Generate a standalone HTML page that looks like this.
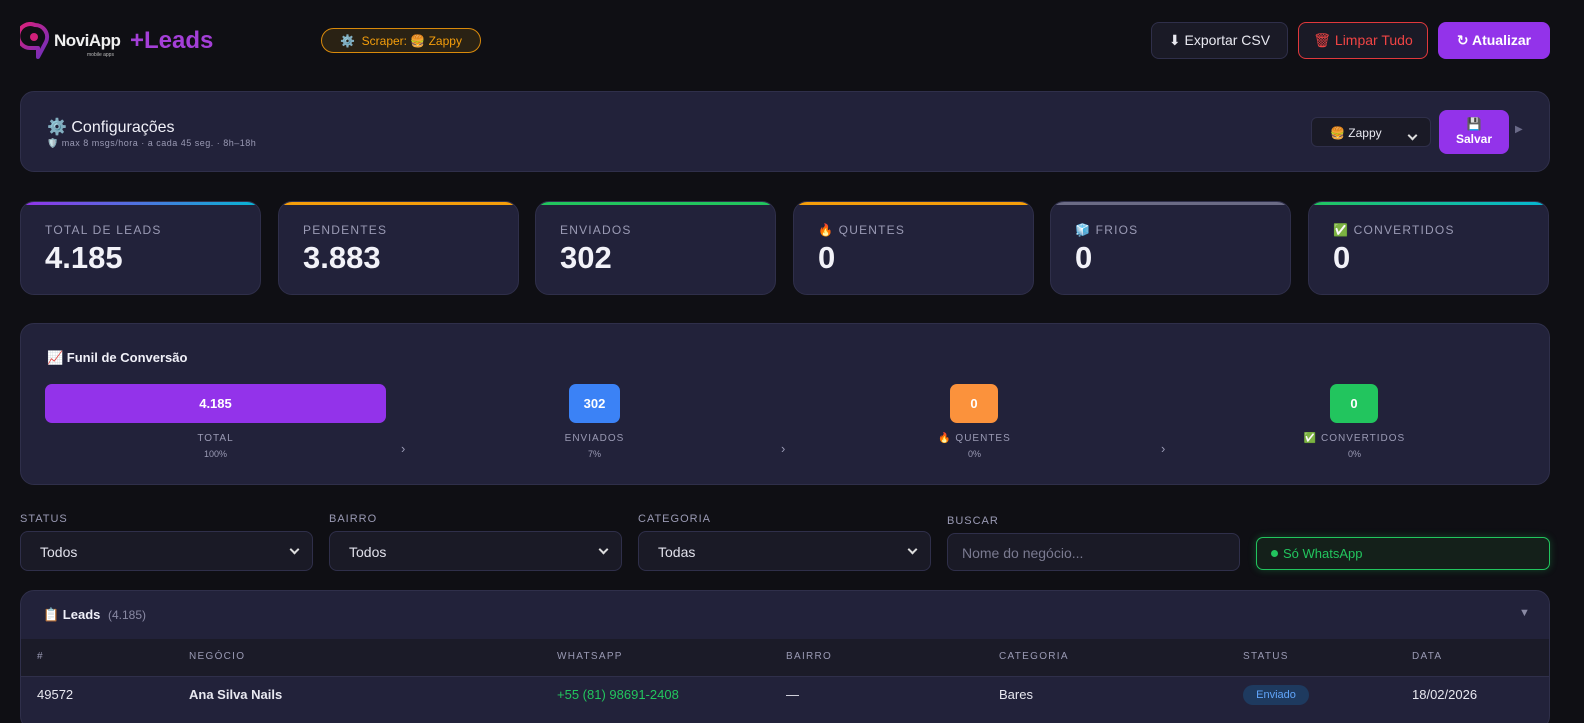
<!DOCTYPE html>
<html><head><meta charset="utf-8"><style>
*{box-sizing:border-box;margin:0;padding:0}
html,body{width:1584px;height:723px;overflow:hidden}
body{background:#0f0f14;font-family:"Liberation Sans","DejaVu Sans",sans-serif;color:#e8e8f0;position:relative}
.a{position:absolute}
.card{position:absolute;background:#22223a;border:1px solid #2f2f4a;border-radius:14px}
.btn{position:absolute;border-radius:8px;font-size:14px;display:flex;align-items:center;justify-content:center}
.stat{position:absolute;top:201px;width:241px;height:94px;background:#22223a;border:1px solid #2f2f4a;border-radius:14px;overflow:hidden}
.stat .bar{position:absolute;left:0;right:0;top:0;height:3px}
.stat .lb{position:absolute;left:24px;top:21px;font-size:12px;letter-spacing:1.2px;color:#9a9ab4}
.stat .v{position:absolute;left:24px;top:38px;font-size:31px;font-weight:bold;color:#f2f2f8}
.fl{position:absolute;top:513px;font-size:11px;letter-spacing:1px;color:#9a9ab4}
.sel{position:absolute;top:531px;width:293px;height:40px;background:#1a1a26;border:1px solid #2f2f4a;border-radius:8px;font-size:14px;color:#e0e0ea;padding:12px 19px}
.dd:after{content:"";position:absolute;right:14px;top:14px;width:5px;height:5px;border-right:2px solid #ddd;border-bottom:2px solid #ddd;transform:rotate(45deg)}
.th{position:absolute;top:651px;font-size:10px;letter-spacing:1.3px;color:#9a9ab4}
.td{position:absolute;top:687px;font-size:13px;color:#e8e8f0}
.stg{position:absolute;text-align:center;font-size:10px;letter-spacing:1px;color:#9a9ab4}
.box{position:absolute;top:384px;height:39px;border-radius:7px;color:#fff;font-weight:bold;font-size:13px;display:flex;align-items:center;justify-content:center}
.arr{position:absolute;top:441px;color:#9a9ab4;font-size:13px}
</style></head><body>
<svg class="a" style="left:20px;top:22px" width="30" height="38" viewBox="0 0 30 38"><defs><linearGradient id="g" x1="0" y1="0" x2="1" y2="1"><stop offset="0" stop-color="#e0207a"/><stop offset="1" stop-color="#6a2fc0"/></linearGradient></defs><path d="M15 3 A12 12 0 1 0 11 26 L 18 26 L 18 35 L 26 20 A12 12 0 0 0 15 3Z" fill="none" stroke="url(#g)" stroke-width="4" stroke-linejoin="round"/><circle cx="14" cy="15" r="4" fill="#d0207a"/></svg>
<div class="a" style="left:54px;top:31px;font-size:17px;font-weight:bold;color:#f0f0f0;letter-spacing:-0.5px">NoviApp</div>
<div class="a" style="left:87px;top:52px;font-size:5px;color:#bbb">mobile apps</div>
<div class="a" style="left:130px;top:27px;font-size:24px;font-weight:bold;color:#a43fd8">+Leads</div>
<div class="a" style="left:321px;top:28px;width:160px;height:25px;border:1px solid #d98a0b;border-radius:13px;background:#2a2214;color:#f59e0b;font-size:12px;display:flex;align-items:center;justify-content:center">⚙️&nbsp; Scraper: 🍔 Zappy</div>
<div class="btn" style="left:1151px;top:22px;width:137px;height:37px;background:#1a1a26;border:1px solid #2f2f4a;color:#e8e8f0">⬇ Exportar CSV</div>
<div class="btn" style="left:1298px;top:22px;width:130px;height:37px;background:#1a1a26;border:1px solid #e0383c;color:#ef4444">🗑 Limpar Tudo</div>
<div class="btn" style="left:1438px;top:22px;width:112px;height:37px;background:#9333ea;color:#fff;font-weight:bold">↻ Atualizar</div>
<div class="card" style="left:20px;top:91px;width:1530px;height:81px"></div>
<div class="a" style="left:47px;top:117px;font-size:16px;color:#f0f0f8">⚙️ Configurações</div>
<div class="a" style="left:47px;top:138px;font-size:9px;color:#9a9ab4;letter-spacing:.5px">🛡️ max 8 msgs/hora · a cada 45 seg. · 8h–18h</div>
<div class="a dd" style="left:1311px;top:117px;width:120px;height:30px;background:#1a1a26;border:1px solid #2f2f4a;border-radius:6px;font-size:12px;padding:8px 18px;color:#e8e8f0">🍔 Zappy</div>
<div class="a" style="left:1439px;top:110px;width:70px;height:44px;border-radius:8px;background:#9333ea;color:#fff;font-weight:bold;font-size:12px;text-align:center;padding-top:7px;line-height:15px">💾<br>Salvar</div>
<div class="a" style="left:1515px;top:124px;font-size:10px;color:#6a6a88">▶</div>
<div class="stat" style="left:20px"><div class="bar" style="background:linear-gradient(90deg,#9333ea,#06b6d4)"></div><div class="lb">TOTAL DE LEADS</div><div class="v">4.185</div></div>
<div class="stat" style="left:278px"><div class="bar" style="background:#f59e0b"></div><div class="lb">PENDENTES</div><div class="v">3.883</div></div>
<div class="stat" style="left:535px"><div class="bar" style="background:#22c55e"></div><div class="lb">ENVIADOS</div><div class="v">302</div></div>
<div class="stat" style="left:793px"><div class="bar" style="background:#f59e0b"></div><div class="lb">🔥 QUENTES</div><div class="v">0</div></div>
<div class="stat" style="left:1050px"><div class="bar" style="background:#6b6b85"></div><div class="lb">🧊 FRIOS</div><div class="v">0</div></div>
<div class="stat" style="left:1308px"><div class="bar" style="background:linear-gradient(90deg,#22c55e,#06b6d4)"></div><div class="lb">✅ CONVERTIDOS</div><div class="v">0</div></div>
<div class="card" style="left:20px;top:323px;width:1530px;height:162px"></div>
<div class="a" style="left:47px;top:350px;font-size:13px;font-weight:bold;color:#f0f0f8">📈 Funil de Conversão</div>
<div class="box" style="left:45px;width:341px;background:#9333ea">4.185</div>
<div class="box" style="left:569px;width:51px;background:#3b82f6">302</div>
<div class="box" style="left:950px;width:48px;background:#fb923c">0</div>
<div class="box" style="left:1330px;width:48px;background:#22c55e">0</div>
<div class="stg" style="left:45px;width:341px;top:433px">TOTAL<br><span style="font-size:9px;letter-spacing:0;line-height:20px">100%</span></div>
<div class="stg" style="left:424px;width:341px;top:433px">ENVIADOS<br><span style="font-size:9px;letter-spacing:0;line-height:20px">7%</span></div>
<div class="stg" style="left:804px;width:341px;top:433px">🔥 QUENTES<br><span style="font-size:9px;letter-spacing:0;line-height:20px">0%</span></div>
<div class="stg" style="left:1184px;width:341px;top:433px">✅ CONVERTIDOS<br><span style="font-size:9px;letter-spacing:0;line-height:20px">0%</span></div>
<div class="arr" style="left:401px">›</div><div class="arr" style="left:781px">›</div><div class="arr" style="left:1161px">›</div>
<div class="fl" style="left:20px">STATUS</div><div class="sel dd" style="left:20px">Todos</div>
<div class="fl" style="left:329px">BAIRRO</div><div class="sel dd" style="left:329px">Todos</div>
<div class="fl" style="left:638px">CATEGORIA</div><div class="sel dd" style="left:638px">Todas</div>
<div class="fl" style="left:947px;top:515px">BUSCAR</div><div class="sel" style="left:947px;top:533px;height:38px;padding:11px 14px;color:#7a7a90">Nome do negócio...</div>
<div class="a" style="left:1256px;top:537px;width:294px;height:33px;border:1px solid #22c55e;border-radius:7px;background:#14201a;box-shadow:0 0 8px rgba(34,197,94,.3);color:#22c55e;font-size:13px;padding:8px 14px"><span style="display:inline-block;width:7px;height:7px;border-radius:50%;background:#22c55e;margin-right:5px;vertical-align:1px"></span>Só WhatsApp</div>
<div class="card" style="left:20px;top:590px;width:1530px;height:140px;overflow:hidden">
<div class="a" style="left:0;right:0;top:48px;height:38px;background:#1b1b28;border-bottom:1px solid #2f2f4a"></div>
</div>
<div class="a" style="left:43px;top:607px;font-size:13px;font-weight:bold;color:#f0f0f8">📋 Leads <span style="font-weight:normal;color:#8a8aa4;font-size:12px;margin-left:4px">(4.185)</span></div>
<div class="a" style="left:1519px;top:607px;font-size:11px;color:#8a8aa4">▼</div>
<div class="th" style="left:37px">#</div><div class="th" style="left:189px">NEGÓCIO</div><div class="th" style="left:557px">WHATSAPP</div><div class="th" style="left:786px">BAIRRO</div><div class="th" style="left:999px">CATEGORIA</div><div class="th" style="left:1243px">STATUS</div><div class="th" style="left:1412px">DATA</div>
<div class="td" style="left:37px">49572</div><div class="td" style="left:189px;font-weight:bold">Ana Silva Nails</div><div class="td" style="left:557px;color:#22c55e">+55 (81) 98691-2408</div><div class="td" style="left:786px">—</div><div class="td" style="left:999px">Bares</div>
<div class="a" style="left:1243px;top:685px;width:66px;height:20px;border-radius:10px;background:#1e3a5f;color:#60a5fa;font-size:11px;text-align:center;line-height:20px">Enviado</div>
<div class="td" style="left:1412px">18/02/2026</div>
</body></html>
